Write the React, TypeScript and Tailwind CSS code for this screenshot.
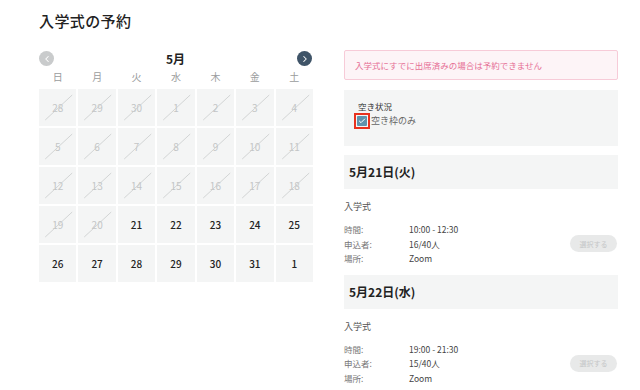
import { Check, ChevronLeft, ChevronRight } from 'lucide-react';

const weekdays = ['日', '月', '火', '水', '木', '金', '土'];

// disabled days get a slash through them
const days: { label: string; off: boolean }[] = [
  ...[28, 29, 30].map((d) => ({ label: String(d), off: true })),
  ...Array.from({ length: 20 }, (_, i) => ({ label: String(i + 1), off: true })),
  ...Array.from({ length: 11 }, (_, i) => ({ label: String(i + 21), off: false })),
  { label: '1', off: false },
];

const events = [
  { date: '5月21日(火)', time: '10:00 - 12:30', count: '16/40人' },
  { date: '5月22日(水)', time: '19:00 - 21:30', count: '15/40人' },
];

function DayCell({ label, off }: { label: string; off: boolean }) {
  return (
    <div className="relative h-[37px] bg-[#f4f5f5] flex items-center justify-center">
      <span
        className={
          off
            ? 'text-[10px] text-[#c3c5c6]'
            : 'text-[10px] font-medium text-[#222]'
        }
      >
        {label}
      </span>
      {off && (
        <svg className="absolute inset-0" width="100%" height="100%" viewBox="0 0 37 37">
          <line x1="6" y1="31" x2="33" y2="6" stroke="#c9cbcc" strokeWidth="0.8" />
        </svg>
      )}
    </div>
  );
}

export default function App() {
  return (
    <div
      className="w-[640px] h-[390px] overflow-hidden bg-white pl-[39px] pt-[11px]"
      style={{ fontFamily: '"Noto Sans CJK JP", "Noto Sans", sans-serif' }}
    >
      {/* Title */}
      <h1 className="text-[15px] leading-[20px] font-medium text-[#222] tracking-wide">
        入学式の予約
      </h1>

      <div className="flex mt-[19px]">
        {/* Calendar */}
        <div className="w-[274px] shrink-0">
          <div className="h-[17px] flex items-center justify-between">
            <div className="w-[15px] h-[15px] rounded-full bg-[#c9cbcc] flex items-center justify-center">
              <ChevronLeft size={10} color="#fff" strokeWidth={2.5} />
            </div>
            <span className="text-[12px] font-semibold text-[#222]">5月</span>
            <div className="w-[15px] h-[15px] mr-[1px] rounded-full bg-[#3f5468] flex items-center justify-center">
              <ChevronRight size={10} color="#fff" strokeWidth={2.5} />
            </div>
          </div>
          <div className="grid grid-cols-7 gap-[2px] h-[18px] items-center">
            {weekdays.map((w) => (
              <span key={w} className="text-center text-[10px] text-[#9a9c9d]">
                {w}
              </span>
            ))}
          </div>
          <div className="grid grid-cols-7 gap-[2px] mt-[4px]">
            {days.map((d, i) => (
              <DayCell key={i} label={d.label} off={d.off} />
            ))}
          </div>
        </div>

        {/* Right side */}
        <div className="ml-[31px] w-[274px] shrink-0">
          <div className="h-[30px] border border-[#f7cbd8] bg-[#fdf4f7] rounded-[2px] flex items-center px-[10px]">
            <span className="text-[8.5px] text-[#e66f95]">
              入学式にすでに出席済みの場合は予約できません
            </span>
          </div>

          <div className="mt-[10px] h-[56px] bg-[#f4f5f5] px-[14px] pt-[10px]">
            <p className="text-[8.5px] leading-[12px] text-[#333]">空き状況</p>
            <div className="flex items-center mt-[1px]">
              <div className="w-[16px] h-[16px] -ml-[4px] border-2 border-[#e8321e] flex items-center justify-center">
                <div className="w-[10px] h-[10px] rounded-[1px] bg-[#5f93ac] flex items-center justify-center">
                  <Check size={8} color="#fff" strokeWidth={3} />
                </div>
              </div>
              <span className="text-[9px] text-[#666] ml-[1px]">空き枠のみ</span>
            </div>
          </div>

          {events.map((e) => (
            <div key={e.date} className="mt-[9px]">
              <div className="h-[34px] bg-[#f4f5f5] flex items-center px-[5px]">
                <span className="text-[12px] font-semibold text-[#222]">{e.date}</span>
              </div>
              <p className="mt-[12px] text-[9px] leading-[12px] text-[#555]">入学式</p>
              <div className="mt-[9px] flex items-center justify-between">
                <div className="text-[8.5px] leading-[14.5px]">
                  <div className="flex">
                    <span className="w-[65px] text-[#777]">時間:</span>
                    <span className="text-[#444]">{e.time}</span>
                  </div>
                  <div className="flex">
                    <span className="w-[65px] text-[#777]">申込者:</span>
                    <span className="text-[#444]">{e.count}</span>
                  </div>
                  <div className="flex">
                    <span className="w-[65px] text-[#777]">場所:</span>
                    <span className="text-[#444]">Zoom</span>
                  </div>
                </div>
                <div className="w-[47px] h-[17px] mr-[1px] rounded-full bg-[#e8e9e9] flex items-center justify-center">
                  <span className="text-[7px] text-[#c5c7c8]">選択する</span>
                </div>
              </div>
            </div>
          ))}
        </div>
      </div>
    </div>
  );
}
